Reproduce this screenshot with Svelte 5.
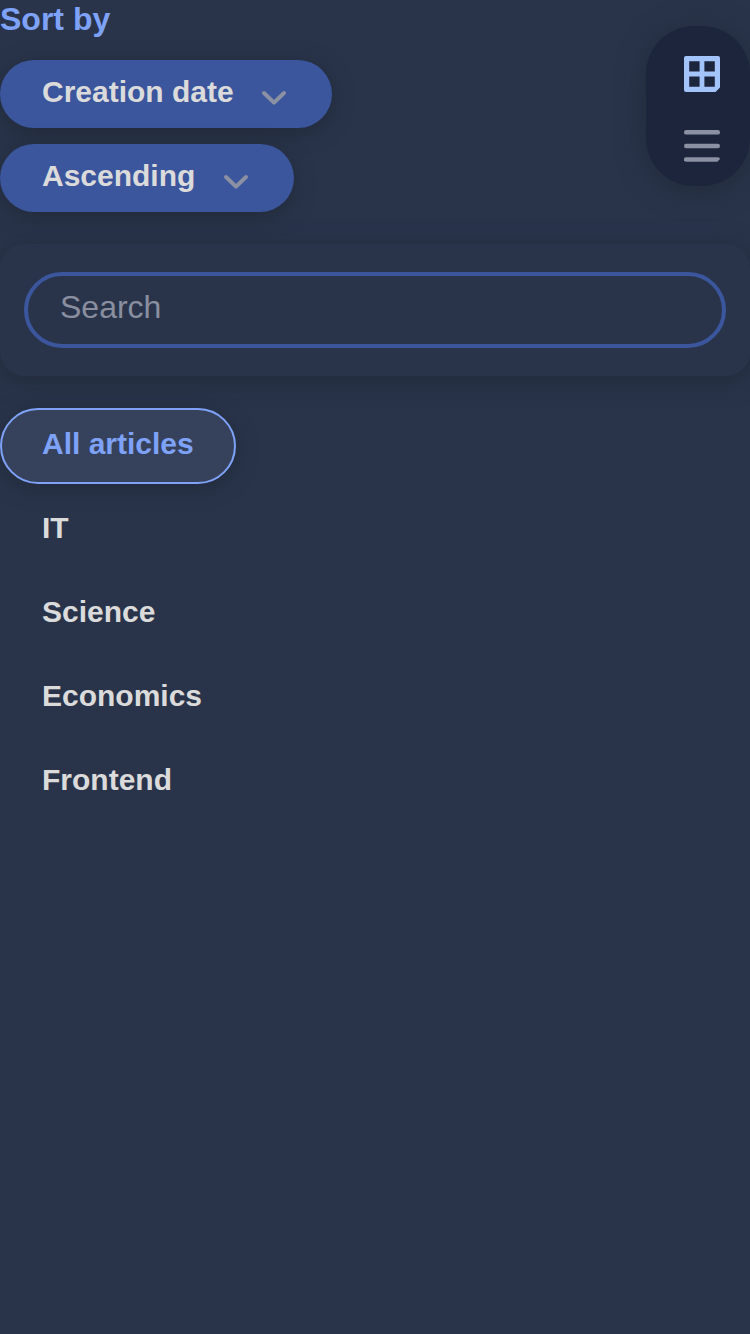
<script>
  const sorts = ['Creation date', 'Ascending'];
  const tabs = ['All articles', 'IT', 'Science', 'Economics', 'Frontend'];
  let active = $state('All articles');
</script>

<main>
  <header>
    <div class="sort">
      <h2>Sort by</h2>
      {#each sorts as label}
        <button class="select">
          <span>{label}</span>
          <svg class="chevron" width="26" height="18" viewBox="0 0 26 18">
            <path d="M3 4L13 13.6L23 4" fill="none" stroke="#8b90a3" stroke-width="4" stroke-linecap="round" stroke-linejoin="round" />
          </svg>
        </button>
      {/each}
    </div>
    <div class="views">
      <svg width="36" height="36" viewBox="0 0 36 36">
        <path fill="#a3c3fb" fill-rule="evenodd" d="M2 0H34Q36 0 36 2V31.5L31.5 36H2Q0 36 0 34V2Q0 0 2 0ZM5.2 5.2V15.6H15.6V5.2ZM20.4 5.2V15.6H30.8V5.2ZM5.2 20.4V30.8H15.6V20.4ZM20.4 20.4V30.8H30.8V20.4Z" />
      </svg>
      <svg width="36" height="32" viewBox="0 0 36 32">
        <g fill="#8b90a3">
          <rect width="36" height="4.6" rx="2.2" />
          <rect y="13.7" width="36" height="4.6" rx="2.2" />
          <path d="M2.2 27.2H33.8Q36 27.2 36 29L33.3 31.8H2.2A2.2 2.2 0 0 1 2.2 27.2Z" />
        </g>
      </svg>
    </div>
  </header>

  <section class="search">
    <input type="text" placeholder="Search" />
  </section>

  <nav>
    {#each tabs as tab}
      <button class="tab" class:active={active === tab} onclick={() => (active = tab)}>{tab}</button>
    {/each}
  </nav>
</main>

<style>
  :global(body) {
    margin: 0;
    background: #29344b;
  }
  main {
    min-height: 1334px;
    overflow: hidden;
    background: #29344b;
    font-family: "Liberation Sans", Arial, sans-serif;
    color: #dbdbdb;
  }
  header {
    display: flex;
    justify-content: space-between;
    align-items: center;
    height: 212px;
  }
  .sort {
    display: flex;
    flex-direction: column;
    align-items: flex-start;
    gap: 16px;
  }
  h2 {
    margin: 0;
    padding-bottom: 6px;
    font-size: 32px;
    line-height: 38px;
    font-weight: 700;
    color: #7ea2f7;
  }
  button {
    font: 700 30px/34px "Liberation Sans", Arial, sans-serif;
    color: #dbdbdb;
    border: 0;
    margin: 0;
    background: none;
    white-space: nowrap;
  }
  .select {
    display: flex;
    align-items: center;
    gap: 27.4px;
    height: 68px;
    padding: 0 45px 4px 42px;
    border-radius: 34px;
    background: #3b569d;
    box-shadow: 0 4px 20px rgba(28, 34, 40, 0.5);
  }
  .chevron {
    margin-top: 12px;
  }
  .views {
    box-sizing: border-box;
    display: flex;
    flex-direction: column;
    align-items: center;
    gap: 38px;
    width: 104px;
    height: 160px;
    padding: 30px 0 0 8px;
    border-radius: 48px;
    background: #1d253c;
    box-shadow: 0 4px 28px rgba(28, 34, 40, 0.5);
  }
  .search {
    box-sizing: border-box;
    height: 132px;
    margin-top: 32px;
    padding: 28px 24px;
    border-radius: 24px;
    background: #29344b;
    box-shadow: 0 4px 24px rgba(28, 34, 40, 0.5);
  }
  input {
    box-sizing: border-box;
    display: block;
    width: 100%;
    height: 76px;
    padding: 0 32px 6px;
    border: 4px solid #3b569d;
    border-radius: 38px;
    outline: 0;
    background: transparent;
    font: 32px/36px "Liberation Sans", Arial, sans-serif;
    color: #dbdbdb;
  }
  input::placeholder {
    color: #8a8fa0;
    opacity: 1;
  }
  nav {
    display: flex;
    flex-direction: column;
    align-items: flex-start;
    gap: 8px;
    margin-top: 32px;
  }
  .tab {
    height: 76px;
    padding: 0 42px 4px;
    border-radius: 38px;
  }
  .active {
    padding: 0 40px 4px;
    border: 2px solid #7ea2f7;
    background: #36415c;
    color: #7ea2f7;
    box-shadow: 0 4px 20px rgba(28, 34, 40, 0.5);
  }
</style>
